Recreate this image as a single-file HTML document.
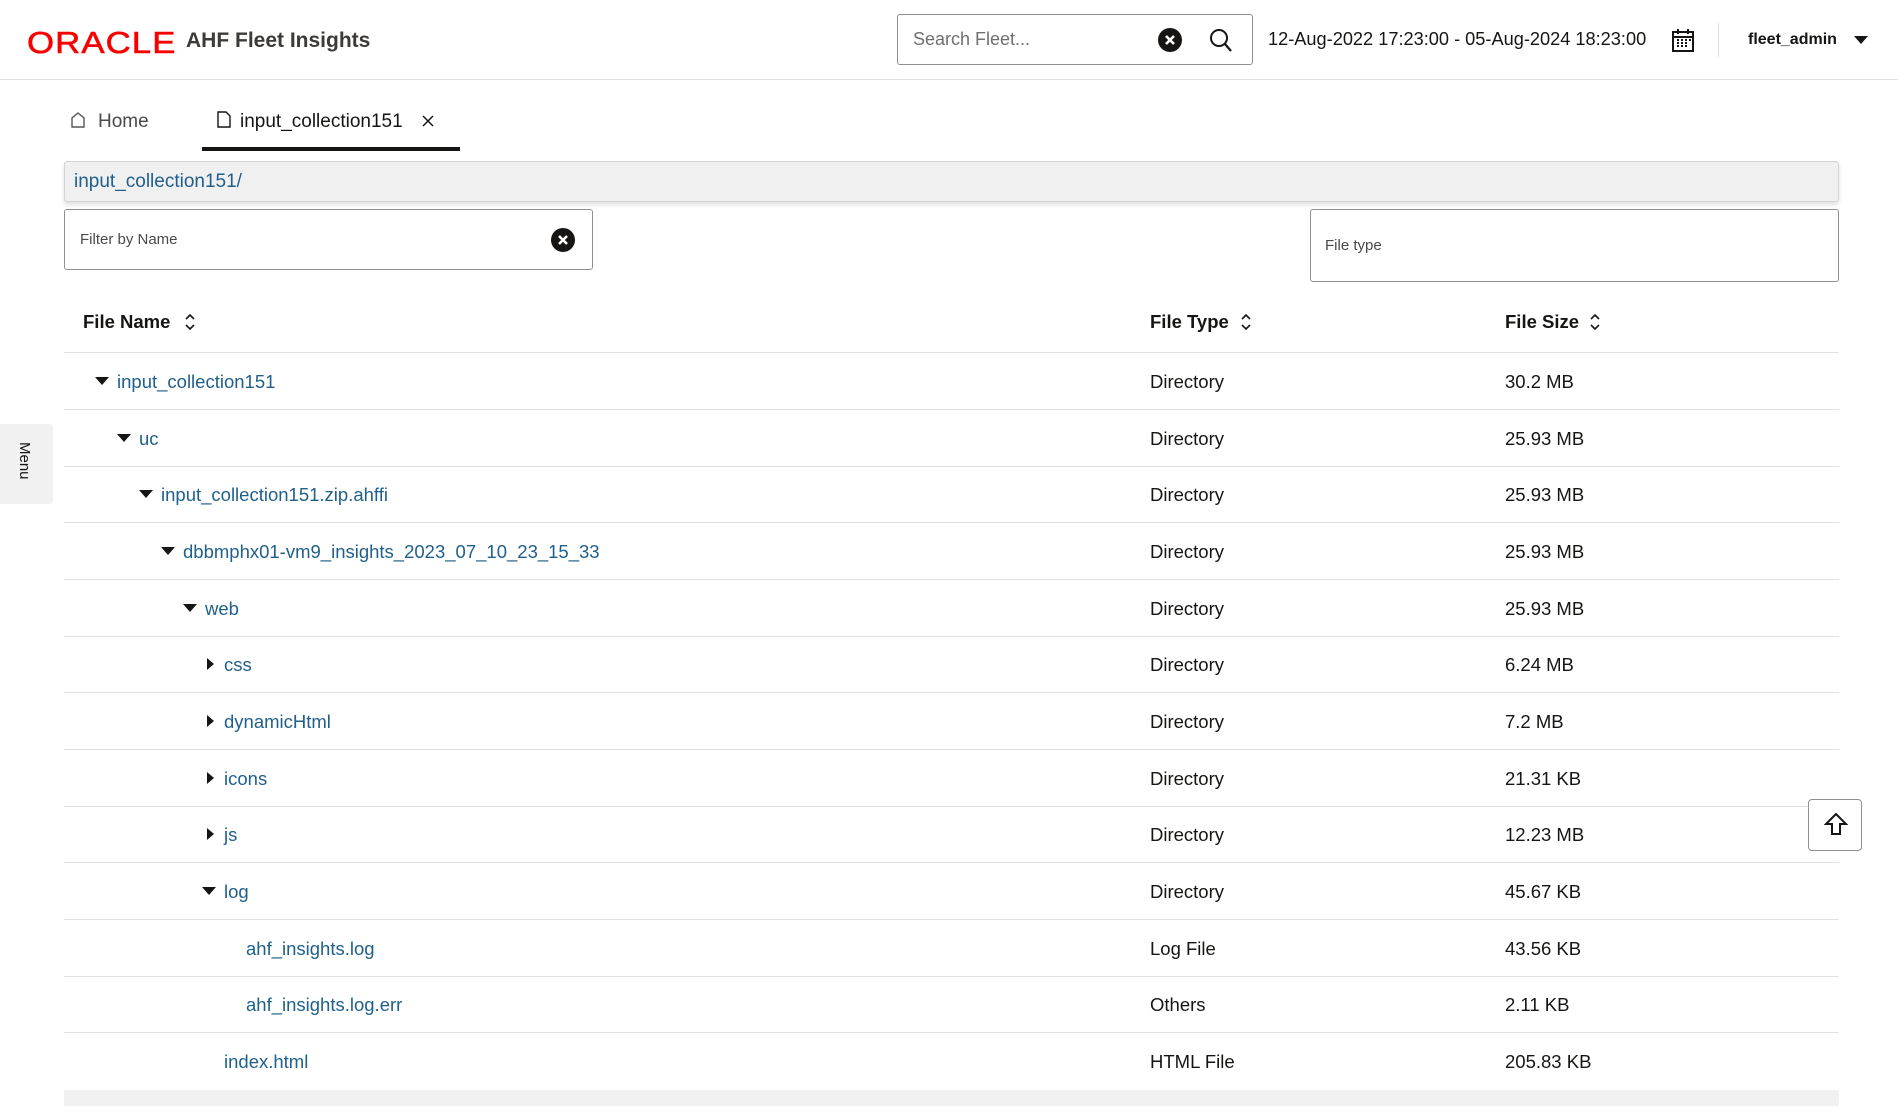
<!DOCTYPE html>
<html><head><meta charset="utf-8"><style>
*{box-sizing:border-box;margin:0;padding:0}
body{width:1898px;height:1120px;background:#fff;font-family:"Liberation Sans",sans-serif;color:#161513;position:relative;overflow:hidden}
.abs{position:absolute}
.hdr{left:0;top:0;width:1898px;height:80px;border-bottom:1px solid #e3e3e3}
.logo{left:27px;top:25px;color:#f80000;font-size:31px;font-weight:normal;letter-spacing:1px;font-family:"Liberation Sans",sans-serif;transform:scaleX(1.12);transform-origin:left;-webkit-text-stroke:0.6px #f80000}
.title{left:186px;top:29px;font-size:21px;font-weight:bold;color:#3d3b38}
.search{left:897px;top:14px;width:356px;height:51px;border:1px solid #8f8f8f;border-radius:3px}
.search span{position:absolute;left:15px;top:14px;font-size:18px;color:#6f6f6f}
.xc{width:24px;height:24px;border-radius:50%;background:#161513}
.date{left:1268px;top:29px;font-size:18.2px}
.row{left:64px;width:1775px;height:57px;border-bottom:1px solid #e2e2e2;font-size:18.5px}
.row .n{position:absolute;top:18px;color:#1f5f8b}
.row .t{position:absolute;left:1086px;top:18px}
.row .s{position:absolute;left:1441px;top:18px}
.car{position:absolute;top:24px;width:0;height:0}
.down{border-left:7px solid transparent;border-right:7px solid transparent;border-top:8px solid #161513}
.right{border-top:6px solid transparent;border-bottom:6px solid transparent;border-left:7px solid #161513;top:22px}
.th{top:311px;font-size:18.5px;font-weight:bold}
</style></head><body>
<div class="abs hdr"></div>
<div class="abs logo">ORACLE</div>
<div class="abs title">AHF Fleet Insights</div>
<div class="abs search"><span>Search Fleet...</span>
<div class="abs xc" style="left:260px;top:13px"><svg width="24" height="24"><path d="M8 8l8 8M16 8l-8 8" stroke="#fff" stroke-width="2.6"/></svg></div>
<svg class="abs" style="left:310px;top:12px" width="26" height="28"><circle cx="11" cy="11" r="8" fill="none" stroke="#161513" stroke-width="2"/><path d="M17 17l6 7" stroke="#161513" stroke-width="2.2"/></svg>
</div>
<div class="abs date">12-Aug-2022 17:23:00 - 05-Aug-2024 18:23:00</div>
<svg class="abs" style="left:1671px;top:28px" width="26" height="26"><rect x="2" y="4" width="20" height="19" fill="none" stroke="#161513" stroke-width="2"/><path d="M2 9h20M7 1v5M17 1v5" stroke="#161513" stroke-width="2"/><path d="M6 12h2M10 12h2M14 12h2M18 12h2M6 15h2M10 15h2M14 15h2M6 18h2M10 18h2M14 18h2" stroke="#161513" stroke-width="2"/></svg>
<div class="abs" style="left:1718px;top:23px;width:1px;height:34px;background:#ddd"></div>
<div class="abs" style="left:1748px;top:31px;font-size:16px;font-weight:bold">fleet_admin</div>
<div class="abs car down" style="left:1854px;top:36px"></div>

<svg class="abs" style="left:70px;top:111px" width="16" height="18"><path d="M2 16V7l6-5 6 5v9z" fill="none" stroke="#555" stroke-width="1.4"/></svg>
<div class="abs" style="left:98px;top:111px;font-size:19px;color:#4a4a4a">Home</div>
<svg class="abs" style="left:216px;top:110px" width="16" height="18"><path d="M2 2h8l4 4v11H2z" fill="none" stroke="#161513" stroke-width="1.4"/></svg>
<div class="abs" style="left:240px;top:111px;font-size:19px">input_collection151</div>
<svg class="abs" style="left:421px;top:114px" width="14" height="14"><path d="M2 2l10 10M12 2L2 12" stroke="#161513" stroke-width="1.5"/></svg>
<div class="abs" style="left:202px;top:147px;width:258px;height:4px;background:#161513"></div>

<div class="abs" style="left:64px;top:161px;width:1775px;height:41px;background:#f0f0f0;border:1px solid #d4d4d4;border-radius:3px;box-shadow:0 3px 5px rgba(0,0,0,.12)"><span class="abs" style="left:9px;top:9px;font-size:19px;color:#1f5f8b">input_collection151/</span></div>
<div class="abs" style="left:64px;top:209px;width:529px;height:61px;border:1px solid #8f8f8f;border-radius:3px"><span class="abs" style="left:15px;top:21px;font-size:15px;color:#4a4a4a">Filter by Name</span>
<div class="abs xc" style="left:486px;top:18px"><svg width="24" height="24"><path d="M8 8l8 8M16 8l-8 8" stroke="#fff" stroke-width="2.6"/></svg></div></div>
<div class="abs" style="left:1310px;top:209px;width:529px;height:73px;border:1px solid #8f8f8f;border-radius:3px"><span class="abs" style="left:14px;top:27px;font-size:15px;color:#4a4a4a">File type</span></div>

<div class="abs th" style="left:83px">File Name</div>
<div class="abs th" style="left:1150px">File Type</div>
<div class="abs th" style="left:1505px">File Size</div>
<svg class="abs" style="left:183px;top:312px" width="14" height="20"><path d="M3 7l4-4 4 4M3 13l4 4 4-4" fill="none" stroke="#161513" stroke-width="1.6"/></svg>
<svg class="abs" style="left:1239px;top:312px" width="14" height="20"><path d="M3 7l4-4 4 4M3 13l4 4 4-4" fill="none" stroke="#161513" stroke-width="1.6"/></svg>
<svg class="abs" style="left:1588px;top:312px" width="14" height="20"><path d="M3 7l4-4 4 4M3 13l4 4 4-4" fill="none" stroke="#161513" stroke-width="1.6"/></svg>
<div class="abs" style="left:64px;top:352px;width:1775px;height:1px;background:#e2e2e2"></div>

<div class="abs row" style="top:353px"><i class="car down" style="left:31px"></i><span class="n" style="left:53px">input_collection151</span><span class="t">Directory</span><span class="s">30.2 MB</span></div>
<div class="abs row" style="top:410px"><i class="car down" style="left:53px"></i><span class="n" style="left:75px">uc</span><span class="t">Directory</span><span class="s">25.93 MB</span></div>
<div class="abs row" style="top:466px"><i class="car down" style="left:75px"></i><span class="n" style="left:97px">input_collection151.zip.ahffi</span><span class="t">Directory</span><span class="s">25.93 MB</span></div>
<div class="abs row" style="top:523px"><i class="car down" style="left:97px"></i><span class="n" style="left:119px">dbbmphx01-vm9_insights_2023_07_10_23_15_33</span><span class="t">Directory</span><span class="s">25.93 MB</span></div>
<div class="abs row" style="top:580px"><i class="car down" style="left:119px"></i><span class="n" style="left:141px">web</span><span class="t">Directory</span><span class="s">25.93 MB</span></div>
<div class="abs row" style="top:636px"><i class="car right" style="left:143px"></i><span class="n" style="left:160px">css</span><span class="t">Directory</span><span class="s">6.24 MB</span></div>
<div class="abs row" style="top:693px"><i class="car right" style="left:143px"></i><span class="n" style="left:160px">dynamicHtml</span><span class="t">Directory</span><span class="s">7.2 MB</span></div>
<div class="abs row" style="top:750px"><i class="car right" style="left:143px"></i><span class="n" style="left:160px">icons</span><span class="t">Directory</span><span class="s">21.31 KB</span></div>
<div class="abs row" style="top:806px"><i class="car right" style="left:143px"></i><span class="n" style="left:160px">js</span><span class="t">Directory</span><span class="s">12.23 MB</span></div>
<div class="abs row" style="top:863px"><i class="car down" style="left:138px"></i><span class="n" style="left:160px">log</span><span class="t">Directory</span><span class="s">45.67 KB</span></div>
<div class="abs row" style="top:920px"><span class="n" style="left:182px">ahf_insights.log</span><span class="t">Log File</span><span class="s">43.56 KB</span></div>
<div class="abs row" style="top:976px"><span class="n" style="left:182px">ahf_insights.log.err</span><span class="t">Others</span><span class="s">2.11 KB</span></div>
<div class="abs row" style="top:1033px;border-bottom:none"><span class="n" style="left:160px">index.html</span><span class="t">HTML File</span><span class="s">205.83 KB</span></div>
<div class="abs" style="left:64px;top:1090px;width:1775px;height:16px;background:#f1f1f1"></div>

<div class="abs" style="left:0;top:424px;width:53px;height:80px;background:#f1f1f1;border-radius:0 3px 3px 0"><span class="abs" style="font-size:15px;transform:rotate(90deg);transform-origin:left top;left:33px;top:18px">Menu</span></div>
<div class="abs" style="left:1808px;top:799px;width:54px;height:52px;border:1px solid #8f8f8f;border-radius:4px;background:#fff"><svg class="abs" style="left:15px;top:12px" width="24" height="26"><path d="M12 2L2 12h6v10h8V12h6z" fill="none" stroke="#161513" stroke-width="2"/></svg></div>
</body></html>
